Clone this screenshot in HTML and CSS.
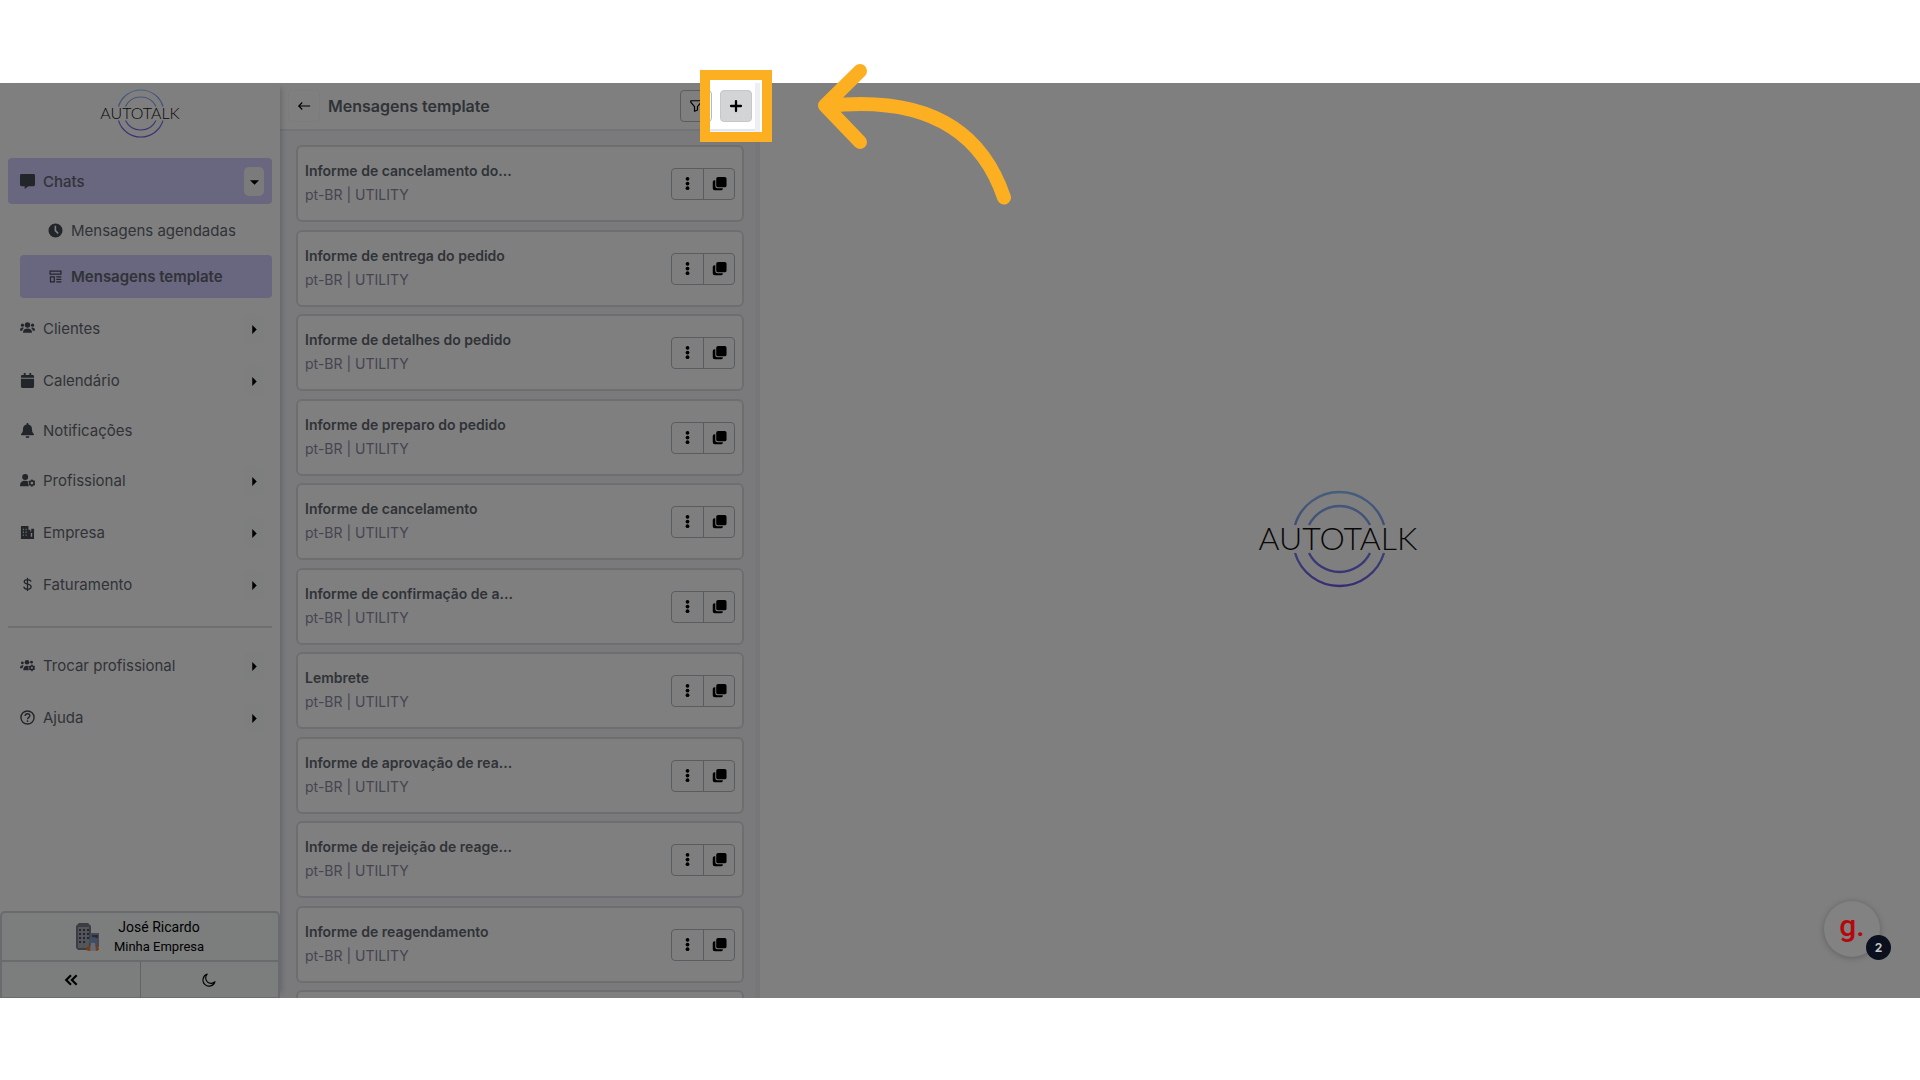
FILE: index.html
```
<!DOCTYPE html>
<html lang="pt-BR">
<head>
  <meta charset="UTF-8" />
  <meta name="viewport" content="width=device-width, initial-scale=1.0" />
  <title>Autotalk - Mensagens template</title>
  <link rel="stylesheet" href="styles.css">
</head>
<body>
  <!-- icons -->
  <svg class="sprite" aria-hidden="true">
    <linearGradient id="ring" x1="0" y1="0" x2="0" y2="1">
      <stop offset="0" stop-color="#8ebdf5" />
      <stop offset="1" stop-color="#6a5be6" />
    </linearGradient>
    <symbol id="i-chat" viewBox="0 0 16 16"><path d="M1.500 0h13A1.500 1.500 0 0 1 16 1.500v10a1.500 1.500 0 0 1-1.500 1.500H9L5 16v-3H1.500A1.500 1.500 0 0 1 0 11.500v-10A1.500 1.500 0 0 1 1.500 0z" /></symbol>
    <symbol id="i-clock" viewBox="0 0 16 16"><path fill-rule="evenodd" d="M8 .5a7.500 7.500 0 1 0 0 15a7.500 7.500 0 0 0 0-15zM7 3h1.700v4.800l2.800 2.800-1.200 1.200L7 8.500z" /></symbol>
    <symbol id="i-template" viewBox="0 0 16 16"><path fill="none" stroke="currentColor" stroke-width="1.500" d="M1.500 1.500h13v3.500h-13zM2 8.500h4.500v6H2zM9 8.500h6M9 11.500h6M9 14.500h6" /></symbol>
    <symbol id="i-users" viewBox="0 0 16 16"><circle cx="8" cy="4.200" r="2.900" /><circle cx="2.600" cy="4.400" r="1.700" /><circle cx="13.400" cy="4.400" r="1.700" /><path d="M3.200 12.500c0-3 1.800-4.500 4.800-4.500s4.800 1.500 4.800 4.500zM0 10.500c0-2.400 1-3.500 2.700-3.500.6 0 1 .1 1.400.4C3 8.300 2.600 9.200 2.400 10.500zM16 10.500c0-2.400-1-3.500-2.700-3.500-.6 0-1 .1-1.400.4 1.100.9 1.500 1.800 1.700 3.100z" /></symbol>
    <symbol id="i-calendar" viewBox="0 0 16 16"><path d="M4 0h2v2h4V0h2v2h1.500A1.500 1.500 0 0 1 15 3.500V5H1V3.500A1.500 1.500 0 0 1 2.500 2H4zM1 6h14v8.500a1.500 1.500 0 0 1-1.500 1.500h-11A1.500 1.500 0 0 1 1 14.500z" /></symbol>
    <symbol id="i-bell" viewBox="0 0 16 16"><path d="M8 0c.7 0 1 .5 1 1v.6c2.300.5 3.800 2.300 3.800 4.800 0 3 .6 4 1.900 5.100.6.600.2 1.500-.6 1.500H1.900c-.8 0-1.200-.9-.6-1.500C2.600 10.400 3.200 9.400 3.200 6.400 3.200 3.900 4.700 2.100 7 1.600V1c0-.5.3-1 1-1zM6 14h4a2 2 0 0 1-4 0z" /></symbol>
    <symbol id="i-usergear" viewBox="0 0 16 16"><circle cx="5.500" cy="4.200" r="3.200" /><path d="M0 14c0-4 2-5.800 5.500-5.800 1.500 0 2.600.3 3.500 1-.7 1.800-.4 3.500.7 4.800z" /><circle cx="12.700" cy="10.700" r="2.300" fill="none" stroke="currentColor" stroke-width="1.700" /><path stroke="currentColor" stroke-width="1.500" d="M12.700 6.800v1.500M12.700 13v1.600M9.300 8.700l1.400.8M14.700 11.900l1.400.8M9.300 12.700l1.400-.8M14.700 9.500l1.400-.8" /></symbol>
    <symbol id="i-building" viewBox="0 0 16 16"><path fill-rule="evenodd" d="M1 1h8v4h2v2h1V4h3v11H1zM3 4v1.500h1V4zM6 4v1.500h1V4zM3 7v1.500h1V7zM6 7v1.500h1V7zM3 10v1.500h1V10zM6 10v1.500h1V10zM11.500 8.500v4H13v-4z" /></symbol>
    <symbol id="i-dollar" viewBox="0 0 16 16"><path fill="none" stroke="currentColor" stroke-width="1.400" d="M11.700 5C11.500 3.500 10 2.700 8 2.700S4.500 3.600 4.500 5.100C4.500 8.600 11.900 6.500 11.900 10.300 11.900 12 10.300 12.900 8 12.900S4.300 12 4 10.200M8 .8v14" /></symbol>
    <symbol id="i-help" viewBox="0 0 16 16"><g fill="none" stroke="currentColor" stroke-width="1.500"><circle cx="8" cy="8" r="7" /><path d="M5.500 6.500C5.500 4.900 6.500 4 8 4s2.500 1 2.500 2.200C10.500 7.800 8 8 8 9.800" /></g><circle cx="8" cy="11.800" r="1" /></symbol>
    <symbol id="i-dots" viewBox="0 0 16 16"><circle cx="8" cy="3" r="2" /><circle cx="8" cy="8" r="2" /><circle cx="8" cy="13" r="2" /></symbol>
    <symbol id="i-copy" viewBox="0 0 16 16"><rect x="4.500" y="1" width="11" height="11" rx="2" /><path d="M3.500 4.500V11A2.200 2.200 0 0 0 5.700 13H11.500v.5a1.800 1.800 0 0 1-1.800 1.800H3A2.200 2.200 0 0 1 .8 13V6.300A1.800 1.800 0 0 1 2.600 4.500z" /></symbol>
    <symbol id="i-caret" viewBox="0 0 8 8"><path d="M2 0l4 4-4 4z" /></symbol>
  </svg>

  <div class="app">
    <aside class="sidebar">
      <svg class="logo logo-small" viewBox="0 0 176 98">
        <path class="rings" d="M45 35A46.500 46.500 0 0 1 134 35M59 35A34 34 0 0 1 120 35M45 63A46.500 46.500 0 0 0 134 63M59 63A34 34 0 0 0 120 63" />
        <text x="88" y="60" text-anchor="middle" class="logo-text">AUTOTALK</text>
      </svg>
      <nav class="menu">
        <div class="item active">
          <svg class="icon"><use href="#i-chat" /></svg>
          <a href="#chats">Chats</a>
          <button class="toggle open" aria-label="Fechar Chats"><svg><use href="#i-caret" /></svg></button>
        </div>
        <div class="submenu">
          <a class="subitem" href="#agendadas"><svg class="icon"><use href="#i-clock" /></svg>Mensagens agendadas</a>
          <a class="subitem active" href="#template"><svg class="icon" viewBox="-1 -1 18 18"><use href="#i-template" width="16" height="16" /></svg>Mensagens template</a>
        </div>
        <div class="item">
          <svg class="icon"><use href="#i-users" /></svg>
          <a href="#clientes">Clientes</a>
          <button class="toggle" aria-label="Abrir Clientes"><svg><use href="#i-caret" /></svg></button>
        </div>
        <div class="item">
          <svg class="icon"><use href="#i-calendar" /></svg>
          <a href="#calendario">Calendário</a>
          <button class="toggle" aria-label="Abrir Calendário"><svg><use href="#i-caret" /></svg></button>
        </div>
        <div class="item plain">
          <svg class="icon"><use href="#i-bell" /></svg>
          <a href="#notificacoes">Notificações</a>
        </div>
        <div class="item">
          <svg class="icon"><use href="#i-usergear" /></svg>
          <a href="#profissional">Profissional</a>
          <button class="toggle" aria-label="Abrir Profissional"><svg><use href="#i-caret" /></svg></button>
        </div>
        <div class="item">
          <svg class="icon"><use href="#i-building" /></svg>
          <a href="#empresa">Empresa</a>
          <button class="toggle" aria-label="Abrir Empresa"><svg><use href="#i-caret" /></svg></button>
        </div>
        <div class="item">
          <svg class="icon"><use href="#i-dollar" /></svg>
          <a href="#faturamento">Faturamento</a>
          <button class="toggle" aria-label="Abrir Faturamento"><svg><use href="#i-caret" /></svg></button>
        </div>
        <hr>
        <div class="item">
          <svg class="icon" viewBox="0 0 16 16"><circle cx="7.500" cy="4.500" r="2.500" /><circle cx="2.500" cy="5.200" r="1.500" /><circle cx="12.300" cy="4.400" r="1.500" /><path d="M3.500 13c0-3.300 1.500-4.700 4-4.700 1 0 1.500.2 2 .5-.9 1.500-.8 3 .2 4.200zM0 11c0-2.200 1-3.300 2.700-3.300.6 0 1 .1 1.400.4C3.200 9 2.800 9.800 2.600 11z" /><circle cx="12.700" cy="10.500" r="2" fill="none" stroke="currentColor" stroke-width="1.800" /><path stroke="currentColor" stroke-width="1.400" d="M12.700 7v1.300M12.700 12.600V14M9.700 8.800l1.100.6M14.600 11.600l1.100.6M9.700 12.200l1.100-.6M14.600 9.400l1.100-.6" /></svg>
          <a href="#trocar">Trocar profissional</a>
          <button class="toggle" aria-label="Abrir Trocar profissional"><svg><use href="#i-caret" /></svg></button>
        </div>
        <div class="item">
          <svg class="icon"><use href="#i-help" /></svg>
          <a href="#ajuda">Ajuda</a>
          <button class="toggle" aria-label="Abrir Ajuda"><svg><use href="#i-caret" /></svg></button>
        </div>
      </nav>

      <div class="account">
        <button class="user">
          <svg class="avatar" viewBox="0 0 24 28">
            <path fill="#777b84" d="M0 3l3-3h9l3 3v24H2l-2-2z" />
            <path fill="#a9abb0" d="M2 4h11v21H2z" />
            <path fill="#454b66" d="M3 6h2v2H3zM7 6h2v2H7zM11 6h2v2h-2zM3 10h2v2H3zM7 10h2v2H7zM11 10h2v2h-2zM3 14h2v2H3zM7 14h2v2H7zM11 14h2v2h-2zM3 18h2v2H3zM7 18h2v2H7z" />
            <path fill="#8f93a3" d="M14 10h9v14h-9z" />
            <path fill="#50577a" d="M16 12h6v3h-6z" />
            <path fill="#e87a34" d="M10 27c0-3 3-5 7-5s6 2 6 5l-3 1h-7z" />
            <circle cx="17" cy="18" r="4" fill="#7f9cc4" />
            <path fill="#c9d6e8" d="M15 20h4l1 8h-6z" />
          </svg>
          <span class="who"><span>José Ricardo</span><small>Minha Empresa</small></span>
        </button>
        <div class="account-actions">
          <button aria-label="Recolher menu"><svg viewBox="0 0 16 16"><path fill="none" stroke="currentColor" stroke-width="2.500" d="M8 2.500L2.500 8 8 13.500M14.500 2.500L9 8l5.500 5.500" /></svg></button>
          <button aria-label="Modo escuro"><svg viewBox="0 0 16 16"><path fill="none" stroke="currentColor" stroke-width="1.300" stroke-linejoin="round" d="M6 1.300A6 6 0 0 0 14.800 10 7 7 0 1 1 6 1.300z" /></svg></button>
        </div>
      </div>
    </aside>

    <section class="panel">
      <header class="panel-header">
        <button class="back" aria-label="Voltar"><svg viewBox="0 0 16 16"><path fill="none" stroke="currentColor" stroke-width="1.300" d="M15 8H2M6 4L2 8l4 4" /></svg></button>
        <h1>Mensagens template</h1>
        <button class="square" aria-label="Filtrar"><svg viewBox="0 0 16 16"><path fill="none" stroke="currentColor" stroke-width="1.400" stroke-linejoin="round" d="M2 2h12v1.600L9.700 8.600V12.500L6.300 14V8.600L2 3.600z" /></svg></button>
        <button class="square add" aria-label="Adicionar"><svg viewBox="0 0 16 16"><path stroke="currentColor" stroke-width="2.600" stroke-linecap="round" d="M8 2.300v11.400M2.300 8h11.400" /></svg></button>
      </header>
      <ul class="cards">
        <li class="card">
          <div class="card-text"><h2>Informe de cancelamento do...</h2><p>pt-BR | UTILITY</p></div>
          <div class="group"><button aria-label="Opções"><svg><use href="#i-dots" /></svg></button><button aria-label="Copiar"><svg><use href="#i-copy" /></svg></button></div>
        </li>
        <li class="card">
          <div class="card-text"><h2>Informe de entrega do pedido</h2><p>pt-BR | UTILITY</p></div>
          <div class="group"><button aria-label="Opções"><svg><use href="#i-dots" /></svg></button><button aria-label="Copiar"><svg><use href="#i-copy" /></svg></button></div>
        </li>
        <li class="card">
          <div class="card-text"><h2>Informe de detalhes do pedido</h2><p>pt-BR | UTILITY</p></div>
          <div class="group"><button aria-label="Opções"><svg><use href="#i-dots" /></svg></button><button aria-label="Copiar"><svg><use href="#i-copy" /></svg></button></div>
        </li>
        <li class="card">
          <div class="card-text"><h2>Informe de preparo do pedido</h2><p>pt-BR | UTILITY</p></div>
          <div class="group"><button aria-label="Opções"><svg><use href="#i-dots" /></svg></button><button aria-label="Copiar"><svg><use href="#i-copy" /></svg></button></div>
        </li>
        <li class="card">
          <div class="card-text"><h2>Informe de cancelamento</h2><p>pt-BR | UTILITY</p></div>
          <div class="group"><button aria-label="Opções"><svg><use href="#i-dots" /></svg></button><button aria-label="Copiar"><svg><use href="#i-copy" /></svg></button></div>
        </li>
        <li class="card">
          <div class="card-text"><h2>Informe de confirmação de a...</h2><p>pt-BR | UTILITY</p></div>
          <div class="group"><button aria-label="Opções"><svg><use href="#i-dots" /></svg></button><button aria-label="Copiar"><svg><use href="#i-copy" /></svg></button></div>
        </li>
        <li class="card">
          <div class="card-text"><h2>Lembrete</h2><p>pt-BR | UTILITY</p></div>
          <div class="group"><button aria-label="Opções"><svg><use href="#i-dots" /></svg></button><button aria-label="Copiar"><svg><use href="#i-copy" /></svg></button></div>
        </li>
        <li class="card">
          <div class="card-text"><h2>Informe de aprovação de rea...</h2><p>pt-BR | UTILITY</p></div>
          <div class="group"><button aria-label="Opções"><svg><use href="#i-dots" /></svg></button><button aria-label="Copiar"><svg><use href="#i-copy" /></svg></button></div>
        </li>
        <li class="card">
          <div class="card-text"><h2>Informe de rejeição de reage...</h2><p>pt-BR | UTILITY</p></div>
          <div class="group"><button aria-label="Opções"><svg><use href="#i-dots" /></svg></button><button aria-label="Copiar"><svg><use href="#i-copy" /></svg></button></div>
        </li>
        <li class="card">
          <div class="card-text"><h2>Informe de reagendamento</h2><p>pt-BR | UTILITY</p></div>
          <div class="group"><button aria-label="Opções"><svg><use href="#i-dots" /></svg></button><button aria-label="Copiar"><svg><use href="#i-copy" /></svg></button></div>
        </li>
        <li class="card"></li>
      </ul>
    </section>
    <div class="resizer"></div>

    <main class="content">
      <svg class="logo logo-big" viewBox="0 0 176 98">
        <path class="rings" d="M45 35A46.500 46.500 0 0 1 134 35M59 35A34 34 0 0 1 120 35M45 63A46.500 46.500 0 0 0 134 63M59 63A34 34 0 0 0 120 63" />
        <text x="88" y="60" text-anchor="middle" class="logo-text">AUTOTALK</text>
      </svg>
    </main>

    <!-- tour overlay -->
    <div class="dim"><div class="hole"></div></div>
    <div class="frame"></div>
    <svg class="arrow" viewBox="0 0 200 146">
      <path d="M45 9L10 43.500L45 80M12 44C85 36 160 50 189 135.500" />
    </svg>

    <button class="widget" aria-label="Guia">
      <span class="widget-logo">g.</span>
      <span class="badge">2</span>
    </button>
  </div>
</body>
</html>
```
FILE: styles.css
```
* {
  margin: 0;
  padding: 0;
  box-sizing: border-box;
}
body {
  height: 100vh;
  display: flex;
  flex-direction: column;
  padding: 83px 0 82px;
  background: #fff;
  color: #5f6770;
  font-family: Inter, sans-serif;
  font-size: 15px;
}
a {
  color: inherit;
  text-decoration: none;
}
button {
  font: inherit;
  color: #000;
  background: none;
  border: none;
  cursor: pointer;
}
svg {
  fill: currentColor;
}
.sprite {
  position: absolute;
  width: 0;
  height: 0;
}
.app {
  position: relative;
  flex: 1;
  min-height: 0;
  display: flex;
}

/* Sidebar */
.sidebar {
  width: 280px;
  display: flex;
  flex-direction: column;
  background: #fff;
  box-shadow: 6px 0 6px -5px rgba(60, 55, 90, 0.3);
  z-index: 1;
}
.logo {
  color: #111;
  overflow: visible;
}
.rings {
  fill: none;
  stroke: url(#ring);
  stroke-width: 2.4px;
}
.logo-text {
  font-family: Lato, sans-serif;
  font-size: 32px;
  font-weight: 300;
}
.logo-small {
  width: 88px;
  height: 49px;
  margin: 6px auto 20px;
}
.menu {
  flex: 1;
  display: flex;
  flex-direction: column;
  gap: 6px;
  padding: 0 8px;
}
.item {
  height: 46px;
  display: flex;
  align-items: center;
  gap: 8px;
  padding: 0 8px 0 12px;
  border-radius: 4px;
}
.item.plain {
  height: 42px;
}
.item a {
  flex: 1;
}
.active {
  background: #d3ccfe;
  font-weight: 600;
}
.item.active {
  font-weight: 500;
}
.icon {
  width: 15px;
  height: 15px;
  color: #454b54;
}
.toggle {
  width: 20px;
  height: 29px;
  border-radius: 5px;
  background: #fbfdfc;
}
.toggle svg {
  width: 9px;
  height: 9px;
}
.toggle.open {
  background: #f6f6f8;
}
.toggle.open svg {
  transform: rotate(90deg);
}
.submenu {
  display: flex;
  flex-direction: column;
  gap: 3px;
  margin-top: -1px;
  padding: 0 0 1px 12px;
}
.subitem {
  height: 43px;
  display: flex;
  align-items: center;
  gap: 8px;
  padding-left: 28px;
  border-radius: 4px;
}
hr {
  border: none;
  height: 2px;
  margin: 13px 0 8px;
  background: #dfdfdf;
}
.account {
  border: 2px solid #d5d6dd;
  border-bottom-width: 1px;
  border-radius: 5px 5px 0 0;
  background: #f8fbfa;
}
.user {
  width: 100%;
  height: 47px;
  display: flex;
  justify-content: center;
  align-items: center;
  gap: 14px;
}
.avatar {
  width: 24px;
  height: 28px;
}
.who {
  display: flex;
  flex-direction: column;
  font-family: Roboto, sans-serif;
  font-size: 14px;
  line-height: 19px;
}
.who small {
  font-size: 13px;
}
.account-actions {
  display: flex;
  border-top: 2px solid #d5d6dd;
}
.account-actions button {
  flex: 1;
  height: 35px;
  display: flex;
  justify-content: center;
  align-items: center;
}
.account-actions button + button {
  border-left: 1px solid #c5c6d0;
}
.account-actions svg {
  width: 14px;
  height: 14px;
}

/* Template list */
.panel {
  width: 475px;
  display: flex;
  flex-direction: column;
  overflow: hidden;
  background: #f4f5fa;
}
.panel-header {
  height: 48px;
  flex-shrink: 0;
  display: flex;
  align-items: center;
  gap: 8px;
  padding: 0 3px 0 8px;
  background: #fff;
  border-bottom: 2px solid #e6e7ee;
}
.panel-header h1 {
  flex: 1;
  font-size: 16px;
  font-weight: 600;
}
.back,
.square {
  width: 32px;
  height: 32px;
  display: flex;
  justify-content: center;
  align-items: center;
  border: 1px solid #b3bac1;
  border-radius: 4px;
}
.back {
  border-color: #f8f8f8;
}
.panel-header svg {
  width: 14px;
  height: 14px;
}
.square.add {
  background: #d3d4d5;
  border-color: #c6c7c8;
}
.cards {
  list-style: none;
  padding: 14px 11px 0 16px;
}
.card {
  height: 77px;
  margin-bottom: 8px;
  display: flex;
  justify-content: space-between;
  align-items: center;
  padding: 0 7px;
  background: #fff;
  border: 2px solid #dcdde0;
  border-radius: 6px;
}
.card:nth-child(even) {
  margin-bottom: 7px;
}
.card-text {
  padding-bottom: 2px;
  font-size: 14px;
  line-height: 24px;
}
.card h2 {
  font-size: 14px;
  font-weight: 600;
}
.card p {
  color: #8a8aa3;
}
.group {
  display: flex;
  border: 1px solid #b3bac1;
  border-radius: 4px;
  background: #fafcfb;
}
.group button {
  width: 31px;
  height: 30px;
  display: flex;
  justify-content: center;
  align-items: center;
}
.group button + button {
  border-left: 1px solid #b3bac1;
}
.group svg {
  width: 15px;
  height: 15px;
}
.resizer {
  width: 5px;
  background: #eeeef5;
}
.content {
  flex: 1;
  display: flex;
  justify-content: center;
  align-items: center;
  padding: 0 4px 4px 0;
  background: #fff;
}
.logo-big {
  width: 176px;
  height: 98px;
}

/* Tour overlay */
.dim {
  position: absolute;
  inset: 0;
  overflow: hidden;
  z-index: 2;
  pointer-events: none;
}
.hole {
  position: absolute;
  left: 710px;
  top: -3px;
  width: 52px;
  height: 52px;
  box-shadow: 0 0 0 4000px rgba(0, 0, 0, 0.5);
}
.frame {
  position: absolute;
  left: 700px;
  top: -13px;
  width: 72px;
  height: 72px;
  border: 10px solid #fdaf22;
  z-index: 3;
}
.arrow {
  position: absolute;
  left: 815px;
  top: -21px;
  width: 200px;
  height: 146px;
  fill: none;
  stroke: #fdaf22;
  stroke-width: 14px;
  stroke-linecap: round;
  stroke-linejoin: round;
  z-index: 3;
}
.widget {
  position: absolute;
  right: 40px;
  bottom: 41px;
  width: 56px;
  height: 56px;
  padding-bottom: 6px;
  border-radius: 50%;
  background: #828282;
  box-shadow: 0 1px 6px rgba(0, 0, 0, 0.25);
  z-index: 3;
}
.widget-logo {
  color: #b5080c;
  font-family: Roboto, sans-serif;
  font-size: 30px;
  font-weight: 500;
  line-height: 30px;
}
.badge {
  position: absolute;
  right: -11px;
  bottom: -3px;
  width: 25px;
  height: 25px;
  border-radius: 50%;
  background: #0a101d;
  color: #c4c4c4;
  font-size: 12px;
  font-weight: 700;
  line-height: 25px;
}
```
